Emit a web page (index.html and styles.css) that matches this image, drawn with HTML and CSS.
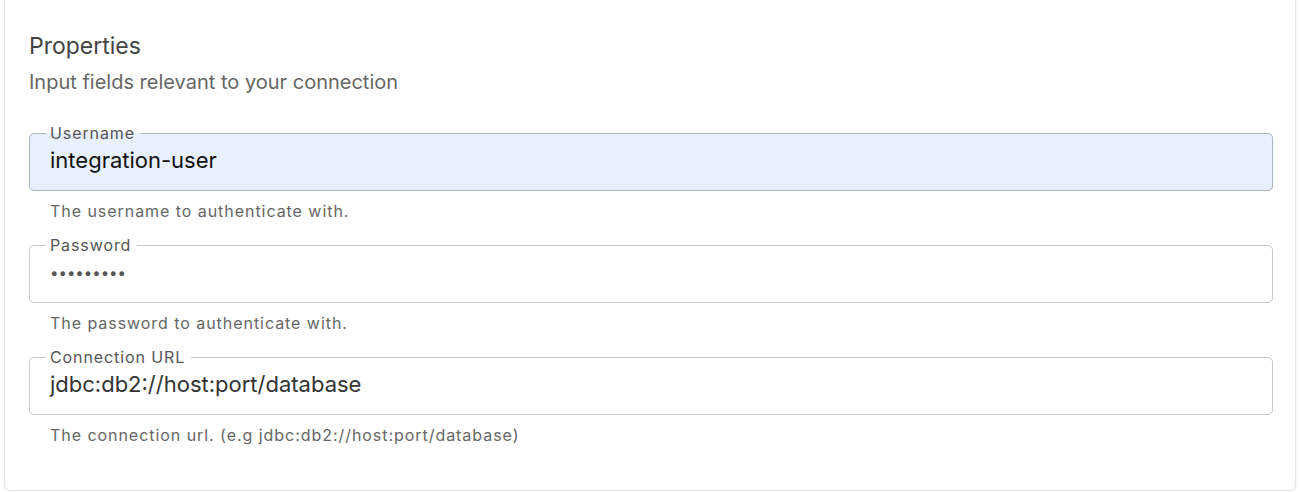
FILE: index.html
```html
<!DOCTYPE html>
<html>
<head>
<meta charset="utf-8">
<link rel="stylesheet" href="styles.css">
</head>
<body>
<div class="card">
  <div class="title">Properties</div>
  <div class="subtitle">Input fields relevant to your connection</div>
  <div class="fields">
    <div class="field">
      <fieldset class="box autofill">
        <legend class="label">Username</legend>
        <div class="value value-dark">integration-user</div>
      </fieldset>
      <div class="helper">The username to authenticate with.</div>
    </div>
    <div class="field">
      <fieldset class="box">
        <legend class="label">Password</legend>
        <div class="value dots">•••••••••</div>
      </fieldset>
      <div class="helper">The password to authenticate with.</div>
    </div>
    <div class="field">
      <fieldset class="box">
        <legend class="label">Connection URL</legend>
        <div class="value">jdbc:db2://host:port/database</div>
      </fieldset>
      <div class="helper">The connection url. (e.g jdbc:db2://host:port/database)</div>
    </div>
  </div>
</div>
</body>
</html>
```

FILE: styles.css
```css
html, body {
  margin: 0;
  padding: 0;
  background: #ffffff;
  font-family: Inter, "Liberation Sans", Arial, sans-serif;
}

.card {
  margin: -10px 4px 0 4px;
  height: 501px;
  box-sizing: border-box;
  border: 1px solid #e6e6e6;
  border-radius: 6px;
  background: #fff;
  box-shadow: 0 1px 3px rgba(0, 0, 0, 0.08);
  padding: 41px 22px 0 24px;
}

.title {
  font-size: 23px;
  line-height: 28px;
  color: #444;
}

.subtitle {
  margin-top: 9px;
  font-size: 20px;
  line-height: 26px;
  color: #666;
}

.fields {
  margin-top: 29px;
  display: flex;
  flex-direction: column;
}

.field {
  display: flex;
  flex-direction: column;
}

.box {
  margin: 0;
  padding: 0 20px 12px 20px;
  border: 1px solid #c8c8c8;
  border-radius: 5px;
  min-width: 0;
}

.box.autofill {
  background: #e8f0fe;
  border-color: #aab4c4;
}

.label {
  margin-left: -4px;
  padding: 0 6px 0 4px;
  font-size: 16px;
  letter-spacing: 0.9px;
  line-height: 18px;
  color: #555;
}

.value {
  height: 36px;
  line-height: 37px;
  font-size: 22px;
  color: #333;
}

.value-dark {
  color: #111;
}

.dots {
  font-size: 15px;
  letter-spacing: 0;
  color: #555;
}

.helper {
  padding: 10px 0 0 21px;
  height: 45px;
  box-sizing: border-box;
  font-size: 16px;
  letter-spacing: 0.95px;
  line-height: 20px;
  color: #666;
}
```
